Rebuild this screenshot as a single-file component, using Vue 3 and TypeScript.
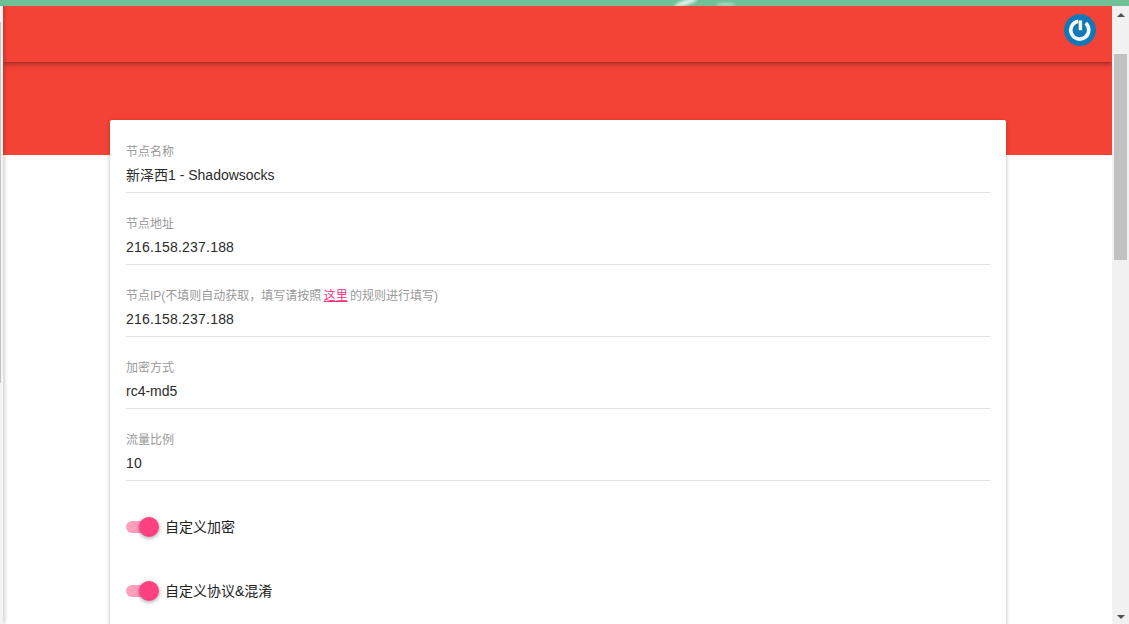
<script setup lang="ts">
interface Field { label: string; value: string; numeric?: boolean }
const fieldsBefore: Field[] = [
  { label: '节点名称', value: '新泽西1 - Shadowsocks' },
  { label: '节点地址', value: '216.158.237.188', numeric: true },
]
const fieldsAfter: Field[] = [
  { label: '加密方式', value: 'rc4-md5' },
  { label: '流量比例', value: '10', numeric: true },
]
const switches: string[] = ['自定义加密', '自定义协议&混淆']
</script>

<template>
  <div class="page">
    <div class="strip">
      <span class="glint glint-a"></span>
      <span class="glint glint-b"></span>
    </div>
    <div class="window">
      <div class="gutter"><span class="gutter-thumb"></span></div>
      <main class="main">
        <header class="appbar">
          <svg class="avatar" width="32" height="32" viewBox="0 0 32 32" aria-hidden="true">
            <circle cx="16" cy="16" r="16" fill="#1278b8" />
            <path d="M21.6 9.2a9 9 0 1 1-7.4-2" fill="none" stroke="#f4f8fb" stroke-width="3.6" />
            <path d="M16.4 6.4v9.8" stroke="#f4f8fb" stroke-width="3.4" fill="none" />
          </svg>
        </header>
        <div class="hero"></div>
        <section class="card">
          <div v-for="f in fieldsBefore" :key="f.label" class="field">
            <div class="label">{{ f.label }}</div>
            <div class="value" :class="{ numeric: f.numeric }">{{ f.value }}</div>
          </div>
          <div class="field">
            <div class="label">节点IP(不填则自动获取，填写请按照 <a class="link">这里</a> 的规则进行填写)</div>
            <div class="value numeric">216.158.237.188</div>
          </div>
          <div v-for="f in fieldsAfter" :key="f.label" class="field">
            <div class="label">{{ f.label }}</div>
            <div class="value" :class="{ numeric: f.numeric }">{{ f.value }}</div>
          </div>
          <div class="switches">
            <div v-for="s in switches" :key="s" class="switch-row">
              <span class="switch"><span class="thumb"></span></span>
              <span class="switch-label">{{ s }}</span>
            </div>
          </div>
        </section>
      </main>
      <aside class="scrollbar">
        <span class="arrow arrow-up"></span>
        <span class="sb-thumb"></span>
        <span class="sb-space"></span>
        <span class="arrow arrow-down"></span>
      </aside>
    </div>
  </div>
</template>

<style>
html, body { margin: 0; height: 100%; overflow: hidden; background: #fff; }
</style>

<style scoped>
.page {
  width: 1129px;
  height: 624px;
  display: flex;
  flex-direction: column;
  overflow: hidden;
  font-family: "Liberation Sans", "Noto Sans CJK SC", sans-serif;
}
.strip {
  height: 6px;
  flex: none;
  background: #70bf96;
  position: relative;
  overflow: hidden;
}
.glint {
  position: absolute;
  background: #e8f4ee;
  border-radius: 50%;
  filter: blur(1.5px);
}
.glint-a { left: 674px; top: 0; width: 24px; height: 5px; transform: rotate(-18deg); }
.glint-b { left: 716px; top: 3px; width: 20px; height: 3px; opacity: 0.6; }
.window {
  flex: 1;
  display: flex;
  min-height: 0;
}
.gutter {
  width: 3px;
  flex: none;
  background: #f4f4f4;
  box-shadow: 1px 0 4px rgba(0, 0, 0, 0.28);
  position: relative;
  z-index: 2;
}
.gutter-thumb {
  display: block;
  width: 1px;
  height: 361px;
  margin-top: 16px;
  background: #c4c4c4;
}
.main {
  flex: 1;
  min-width: 0;
  overflow: hidden;
}
.appbar {
  height: 56px;
  background: #f44336;
  display: flex;
  justify-content: flex-end;
  align-items: flex-start;
  padding: 8px 16px 0 0;
  box-sizing: border-box;
  box-shadow: 0 2px 5px rgba(0, 0, 0, 0.36);
  position: relative;
  z-index: 1;
}
.avatar { display: block; }
.hero {
  height: 93px;
  background: #f44336;
}
.card {
  width: 864px;
  margin: -35px 0 0 107px;
  padding: 16px 16px 0;
  background: #fff;
  border-radius: 2px;
  box-shadow: 0 1px 4px rgba(0, 0, 0, 0.28);
  position: relative;
  z-index: 1;
  height: 600px;
}
.field {
  height: 56px;
  border-bottom: 1px solid #e0e0e0;
  margin-bottom: 15px;
}
.label {
  font-size: 12px;
  line-height: 16px;
  color: #999;
  padding-top: 8px;
}
.link { color: #f5317f; text-decoration: underline; margin: 0 -1px; }
.value {
  font-size: 14px;
  line-height: 20px;
  margin-top: 5px;
  color: #2b2b2b;
}
.numeric { letter-spacing: 0.2px; }
.switches {
  display: flex;
  flex-direction: column;
  gap: 44px;
  padding-top: 21px;
}
.switch-row {
  display: flex;
  align-items: center;
  height: 20px;
}
.switch {
  position: relative;
  width: 24px;
  height: 12px;
  border-radius: 6px;
  background: #ff9fbc;
  flex: none;
}
.thumb {
  position: absolute;
  left: 12.5px;
  top: -4px;
  width: 20px;
  height: 20px;
  border-radius: 50%;
  background: #ff4081;
  box-shadow: 0 1px 4px rgba(0, 0, 0, 0.4);
}
.switch-label {
  margin-left: 15px;
  padding-bottom: 2px;
  font-size: 14px;
  color: #212121;
}
.scrollbar {
  width: 17px;
  flex: none;
  background: #f1f1f1;
  display: flex;
  flex-direction: column;
  align-items: center;
  position: relative;
  z-index: 3;
}
.arrow {
  flex: none;
  width: 0;
  height: 0;
  border-left: 4px solid transparent;
  border-right: 4px solid transparent;
}
.arrow-up { border-bottom: 4px solid #505050; margin: 7px 0 37px; }
.arrow-down { border-top: 4px solid #505050; margin: 7px 0 5px; }
.sb-thumb {
  flex: none;
  width: 13px;
  height: 206px;
  background: #c1c1c1;
}
.sb-space { flex: 1; }
</style>
